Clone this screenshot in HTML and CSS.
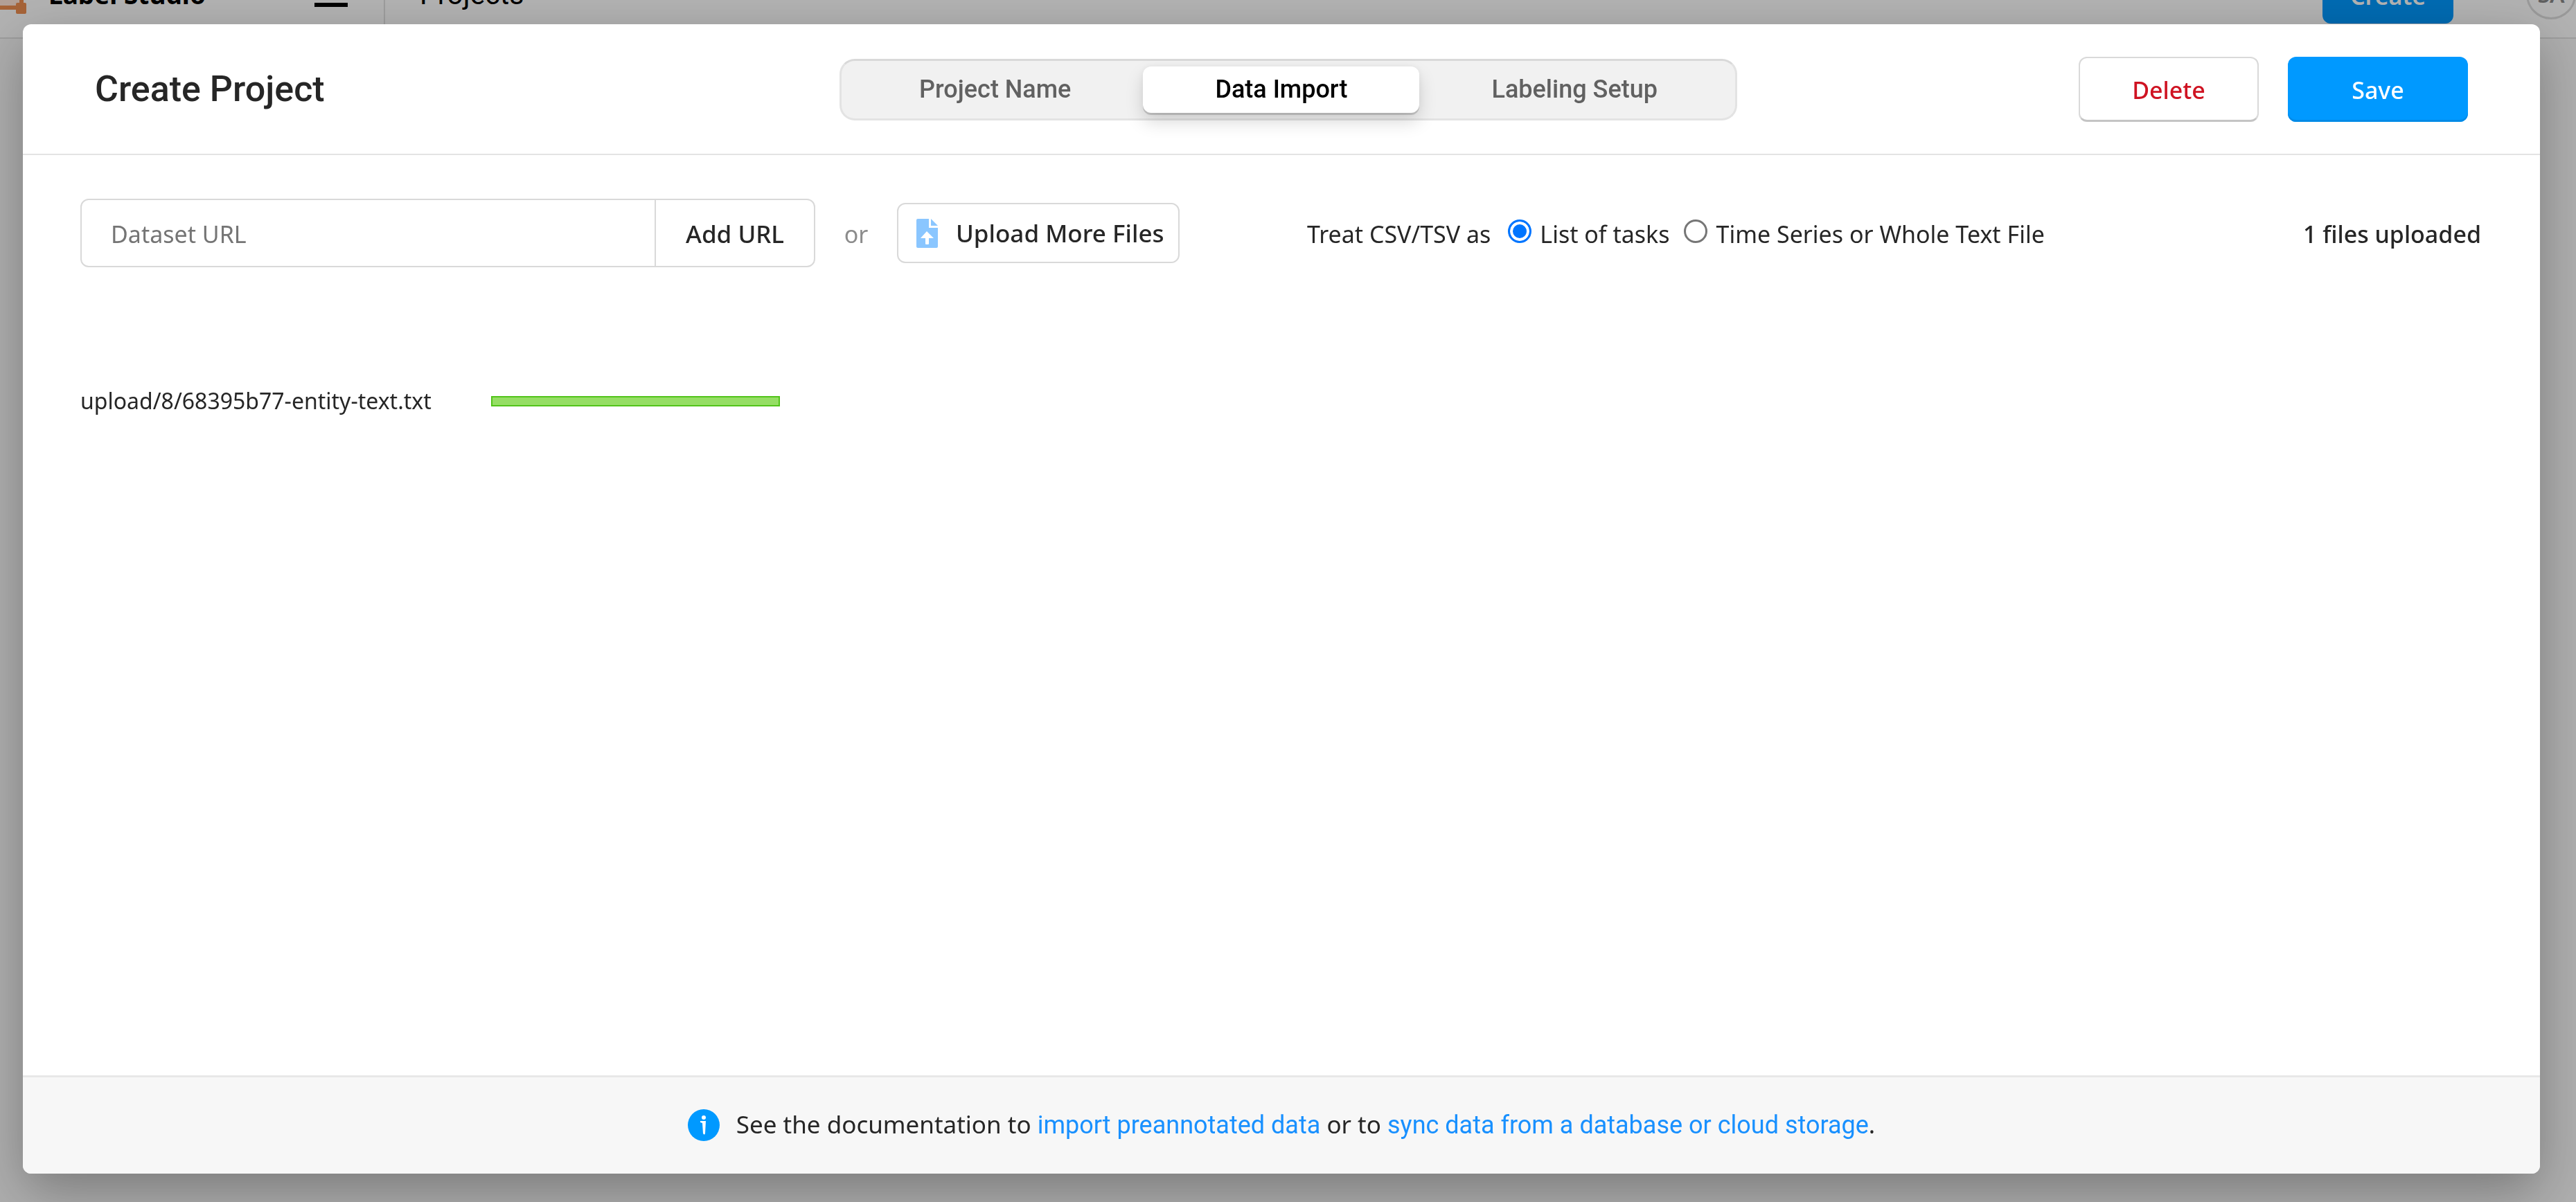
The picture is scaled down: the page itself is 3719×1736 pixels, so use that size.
FILE: index.html
```
<!DOCTYPE html>
<html lang="en">
<head>
<meta charset="utf-8">
<title>Label Studio</title>
<link rel="stylesheet" href="styles.css">
</head>
<body>
<header class="menubar">
  <a class="brand" href="#">
    <svg class="brand-mark" viewBox="0 0 38 72" aria-hidden="true">
      <rect x="0" y="12" width="30" height="48" fill="#ffe4d6"/>
      <path d="M31 0V60M0 63H30" fill="none" stroke="#ee8e50" stroke-width="6"/>
      <rect x="23" y="56" width="15" height="16" rx="2" fill="#ee8e50"/>
    </svg>
    <span class="brand-name">Label Studio</span>
  </a>
  <button class="burger" type="button" aria-label="Menu"><span></span><span></span><span></span></button>
  <nav class="crumbs"><a href="#">Projects</a></nav>
  <button class="create" type="button">Create</button>
  <span class="avatar">SA</span>
</header>

<div class="overlay">
  <section class="modal" role="dialog" aria-labelledby="modal-title">
    <header class="modal-header">
      <h1 class="modal-title" id="modal-title">Create Project</h1>
      <div class="tabs" role="tablist">
        <button class="tab" type="button" role="tab">Project Name</button>
        <button class="tab tab-active" type="button" role="tab" aria-selected="true">Data Import</button>
        <button class="tab" type="button" role="tab">Labeling Setup</button>
      </div>
      <div class="actions">
        <button class="btn btn-delete" type="button">Delete</button>
        <button class="btn btn-save" type="button">Save</button>
      </div>
    </header>

    <main class="import">
      <div class="toolbar">
        <form class="url-form">
          <input class="url-input" type="text" placeholder="Dataset URL" aria-label="Dataset URL">
          <button class="url-button" type="button">Add URL</button>
        </form>
        <span class="or">or</span>
        <button class="upload" type="button">
          <svg class="upload-icon" viewBox="0 0 31 42" aria-hidden="true">
            <path d="M2 0H18V13H31V40Q31 42 29 42H2Q0 42 0 40V2Q0 0 2 0Z" fill="#8ac6ff"/>
            <path d="M21 0L31 10H21Z" fill="#8ac6ff"/>
            <path d="M15 18L25 28H18V36Q18 37 17 37H14Q13 37 13 36V28H6Z" fill="#fff"/>
          </svg>
          Upload More Files
        </button>
        <div class="csv" role="radiogroup" aria-labelledby="csv-label">
          <span class="csv-label" id="csv-label">Treat CSV/TSV as</span>
          <label class="choice"><input type="radio" name="csv" checked>List of tasks</label>
          <label class="choice"><input type="radio" name="csv">Time Series or Whole Text File</label>
        </div>
        <span class="count">1 files uploaded</span>
      </div>

      <table class="files">
        <tr>
          <td class="file-name">upload/8/68395b77-entity-text.txt</td>
          <td><div class="file-status"></div></td>
        </tr>
      </table>
    </main>

    <footer class="modal-footer">
      <svg class="info" viewBox="0 0 46 46" aria-hidden="true">
        <circle cx="23" cy="23" r="23" fill="#09f"/>
        <circle cx="23" cy="12" r="3" fill="#fff"/>
        <path d="M18 17H26L25 35Q24 38 22 35L21 20L18 19Z" fill="#fff"/>
      </svg>
      <p>See the documentation to <a href="#">import preannotated data</a> or to <a href="#">sync data from a database or cloud storage</a>.</p>
    </footer>
  </section>
</div>
</body>
</html>
```
FILE: styles.css
```
* {
  box-sizing: border-box;
}

body {
  margin: 0;
  min-height: 100vh;
  overflow: hidden;
  background: #fafafa;
  color: #262626;
  font-family: "Noto Sans", sans-serif;
  font-size: 34px;
  line-height: 50px;
}

button,
input {
  margin: 0;
  font: inherit;
  color: inherit;
}

a {
  text-decoration: none;
}

/* Page bar, scrolled partly out of view behind the dialog */
.menubar {
  display: flex;
  align-items: center;
  height: 126px;
  margin-top: -70px;
  border-bottom: 2px solid #e1e1e1;
  background: #fff;
  color: #000;
}

.brand {
  display: flex;
  align-items: center;
  gap: 32px;
  width: 454px;
  color: inherit;
}

.brand-mark {
  width: 38px;
  height: 72px;
  margin-top: -16px;
}

.brand-name {
  font-size: 37px;
  font-weight: 700;
}

.burger {
  display: flex;
  flex-direction: column;
  gap: 9px;
  width: 100px;
  padding: 0 52px 0 0;
  border: 0;
  background: none;
}

.burger span {
  height: 6px;
  background: #000;
}

.crumbs {
  flex: 1;
  display: flex;
  align-items: center;
  height: 100%;
  padding-left: 50px;
  border-left: 2px solid #e1e1e1;
}

.crumbs a {
  color: inherit;
  font-family: Roboto, sans-serif;
  font-size: 41px;
}

.create {
  width: 189px;
  height: 84px;
  margin-right: 105px;
  padding: 4px 0 0;
  border: 0;
  border-radius: 12px;
  background: #09f;
  color: #fff;
  font-weight: 600;
}

.avatar {
  width: 72px;
  height: 72px;
  border: 3px solid #dcdcdc;
  border-radius: 50%;
  color: #888;
  font-size: 32px;
  font-weight: 600;
  line-height: 66px;
  text-align: center;
}

.overlay {
  position: fixed;
  inset: 0;
  display: flex;
  padding: 35px 52px 41px 33px;
  background: rgba(0, 0, 0, 0.3);
}

.modal {
  flex: 1;
  display: flex;
  flex-direction: column;
  overflow: hidden;
  border-radius: 12px;
  background: #fff;
  box-shadow: 0 26px 78px rgba(0, 0, 0, 0.3);
}

.modal-header {
  display: grid;
  grid-template-columns: 1fr auto 1fr;
  align-items: center;
  padding: 47px 84px 46px 104px;
  border-bottom: 2px solid #e3e3e3;
}

.modal-title {
  margin: 0;
  font-family: Roboto, sans-serif;
  font-size: 52px;
  font-weight: 500;
  line-height: 60px;
}

.tabs {
  display: flex;
  padding: 8px;
  border: 3px solid #e3e3e3;
  border-top-color: #d9d9d9;
  border-radius: 22px;
  background: #f1f1f1;
}

.tab {
  height: 67px;
  padding: 0 104px;
  border: 0;
  border-radius: 12px;
  background: none;
  color: #616161;
  font-family: Roboto, sans-serif;
  font-size: 36px;
  font-weight: 500;
}

.tab-active {
  background: #fff;
  color: #000;
  box-shadow: 0 3px 0 rgba(0, 0, 0, 0.15), 0 13px 26px rgba(0, 0, 0, 0.15), 0 0 8px rgba(0, 0, 0, 0.05);
}

.actions {
  display: flex;
  justify-content: flex-end;
  gap: 42px;
  padding-right: 20px;
}

.btn {
  width: 260px;
  height: 94px;
  padding: 2px 0 0;
  border: 0;
  border-radius: 12px;
  font-weight: 500;
}

.btn-delete {
  border: 2px solid #d9d9d9;
  border-bottom: 3px solid #c4c4c4;
  background: #fff;
  color: #cf1322;
}

.btn-save {
  background: #09f;
  color: #fff;
  box-shadow: inset 0 -3px 0 #008ae6;
}

.import {
  flex: 1;
  padding: 63px 85px 0 83px;
}

.toolbar {
  display: flex;
  align-items: center;
}

.url-form {
  display: flex;
  width: 1061px;
  height: 99px;
  border: 2px solid #d9d9d9;
  border-radius: 12px;
}

.url-input {
  flex: 1;
  min-width: 0;
  padding: 2px 42px 0;
  border: 0;
  background: none;
}

.url-input::placeholder {
  color: #757575;
  opacity: 1;
}

.url-button {
  width: 230px;
  padding: 2px 0 0;
  border: 0;
  border-left: 2px solid #d9d9d9;
  background: none;
  font-size: 35px;
  font-weight: 500;
}

.or {
  width: 118px;
  padding-top: 2px;
  color: #8c8c8c;
  text-align: center;
}

.upload {
  display: flex;
  align-items: center;
  gap: 26px;
  width: 408px;
  height: 87px;
  padding: 0 0 0 26px;
  border: 2px solid #d9d9d9;
  border-radius: 12px;
  background: #fff;
  font-size: 35px;
  font-weight: 500;
  white-space: nowrap;
}

.upload-icon {
  width: 31px;
  height: 42px;
}

.csv {
  display: flex;
  gap: 21px;
  margin-left: 184px;
  padding-top: 2px;
}

.csv-label {
  padding-right: 4px;
}

.choice {
  display: flex;
  gap: 12px;
}

.choice input {
  appearance: none;
  width: 34px;
  height: 34px;
  margin-top: 4px;
  border: 3px solid #767676;
  border-radius: 50%;
  background: #fff;
}

.choice input:checked {
  border-color: #0075ff;
  background: #0075ff;
  box-shadow: inset 0 0 0 4px #fff;
}

.count {
  margin-left: auto;
  padding-top: 2px;
  font-size: 34px;
  font-weight: 500;
}

.files {
  margin-top: 168px;
  border-collapse: collapse;
}

.files td {
  padding: 0;
}

.files .file-name {
  width: 593px;
  font-size: 32px;
}

.file-status {
  width: 417px;
  height: 15px;
  border: 2px solid #52c41a;
  background: #95de64;
}

.modal-footer {
  display: flex;
  align-items: center;
  justify-content: center;
  gap: 24px;
  height: 142px;
  padding-bottom: 2px;
  border-top: 3px solid #e8e8e8;
  background: #f7f7f7;
}

.modal-footer p {
  margin: 0;
  font-size: 35px;
}

.modal-footer a {
  color: #1890ff;
  font-family: Roboto, sans-serif;
  font-size: 36px;
}

.info {
  width: 46px;
  height: 46px;
}
```
